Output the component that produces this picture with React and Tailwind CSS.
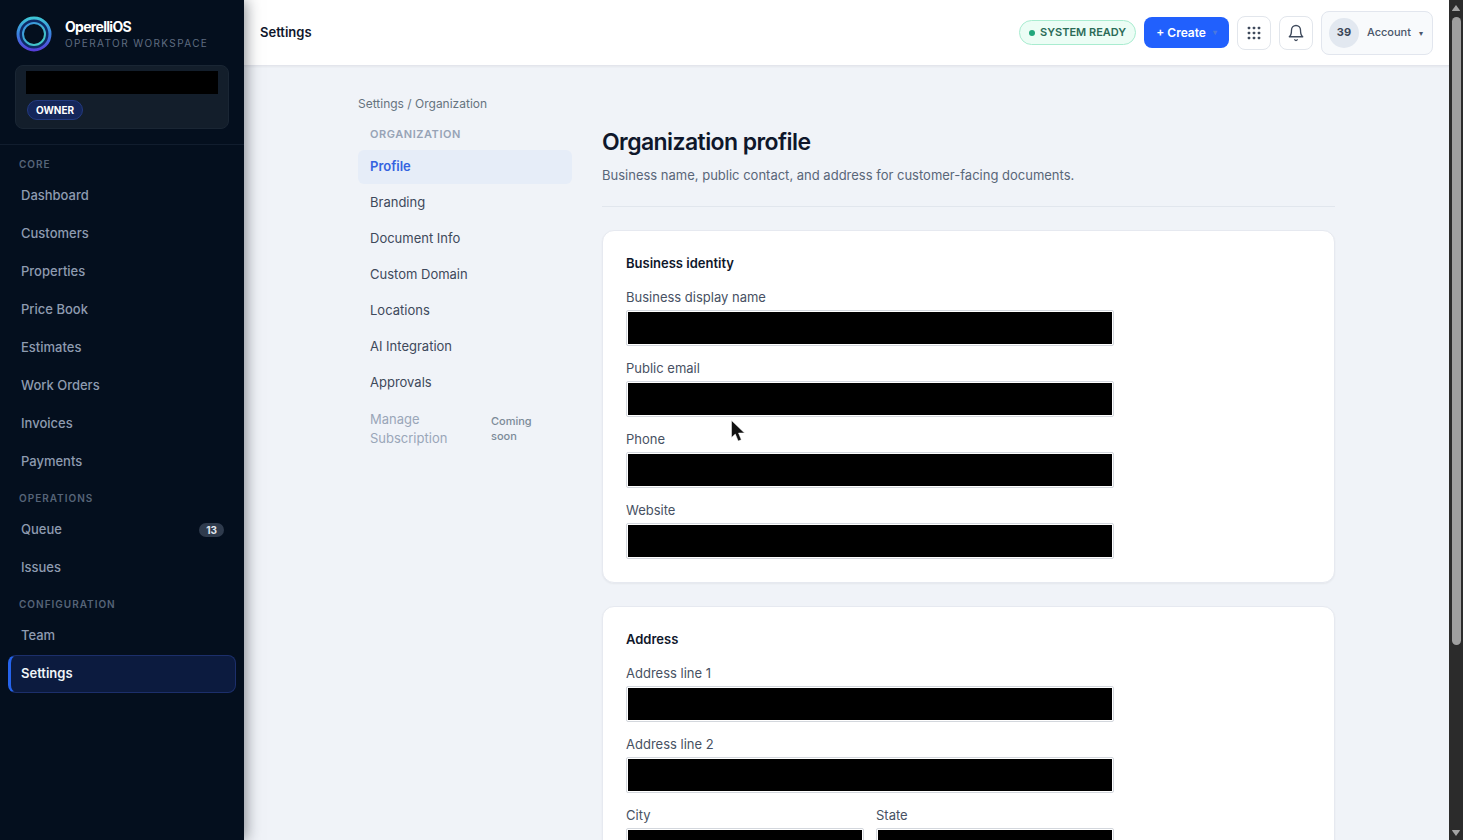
import React from "react";

const navSections = [
  {
    title: "Core",
    items: [
      { label: "Dashboard" },
      { label: "Customers" },
      { label: "Properties" },
      { label: "Price Book" },
      { label: "Estimates" },
      { label: "Work Orders" },
      { label: "Invoices" },
      { label: "Payments" },
    ],
  },
  {
    title: "Operations",
    items: [{ label: "Queue", count: 13 }, { label: "Issues" }],
  },
  {
    title: "Configuration",
    items: [{ label: "Team" }, { label: "Settings", active: true }],
  },
];

const settingsLinks = [
  "Profile",
  "Branding",
  "Document Info",
  "Custom Domain",
  "Locations",
  "AI Integration",
  "Approvals",
];

const Logo = () => (
  <svg className="w-[38px] h-[38px] shrink-0" viewBox="0 0 38 38" fill="none">
    <defs>
      <linearGradient id="ringOuter" x1="19" y1="0" x2="19" y2="38" gradientUnits="userSpaceOnUse">
        <stop stopColor="#3fd0d4" />
        <stop offset="0.5" stopColor="#3b82e0" />
        <stop offset="1" stopColor="#5b35d8" />
      </linearGradient>
      <linearGradient id="ringInner" x1="10" y1="8" x2="28" y2="30" gradientUnits="userSpaceOnUse">
        <stop stopColor="#3a8fe0" />
        <stop offset="1" stopColor="#45cfc4" />
      </linearGradient>
    </defs>
    <circle cx="19" cy="19" r="14" stroke="#0d2a66" strokeWidth="5" />
    <circle cx="19" cy="19" r="16" stroke="url(#ringOuter)" strokeWidth="3" />
    <circle cx="19" cy="19" r="11" stroke="url(#ringInner)" strokeWidth="2" />
  </svg>
);

const NavItem = ({ item }) => (
  <a
    href="#"
    className={
      item.active
        ? "flex items-center h-[38px] pl-[10px] pr-3 rounded-lg border border-l-[3px] border-[#1c2f6b] border-l-[#2563eb] bg-[#0c1b3f] text-[13px] font-semibold text-slate-100"
        : "flex items-center h-[38px] pl-[13px] pr-3 text-[13px] font-medium text-[#8e9bb0]"
    }
  >
    <span className="flex-1">{item.label}</span>
    {item.count && (
      <span className="rounded-full bg-[#2f3b4d] px-[7px] text-[10px] leading-[14px] font-bold text-slate-200">
        {item.count}
      </span>
    )}
  </a>
);

const Sidebar = () => (
  <aside className="relative z-10 w-[244px] shrink-0 bg-[#040f1e] shadow-[2px_0_14px_rgba(30,35,45,0.5)]">
    <div className="border-b border-[#111d2e] px-[15px] pt-[15px] pb-[15px]">
      <div className="flex items-center gap-3">
        <Logo />
        <div>
          <p className="text-sm leading-[18px] font-bold tracking-tighter text-white">OperelliOS</p>
          <p className="text-[10px] leading-[14px] tracking-[0.14em] text-[#5f6c80]">OPERATOR WORKSPACE</p>
        </div>
      </div>
      <div className="mt-3 h-16 rounded-lg border border-[#1a2634] bg-[#131e2b] px-[10px] pt-[5px]">
        <div className="h-[23px] bg-black"></div>
        <span className="mt-[6px] ml-px inline-block rounded-full border border-[#233a80] bg-[#14265a] px-2 text-[10px] leading-[18px] font-bold text-white">
          OWNER
        </span>
      </div>
    </div>
    <nav className="px-2 pt-[2px]">
      {navSections.map((section) => (
        <div key={section.title}>
          <h2 className="px-[11px] pt-[10px] pb-[6px] text-[10px] leading-[14px] font-semibold uppercase tracking-widest text-[#566478]">
            {section.title}
          </h2>
          {section.items.map((item) => (
            <NavItem key={item.label} item={item} />
          ))}
        </div>
      ))}
    </nav>
  </aside>
);

const Header = () => (
  <header className="flex items-center justify-between h-[66px] shrink-0 border-b border-[#e3e5ec] bg-white px-4 shadow-xs">
    <p className="text-[13px] font-semibold text-slate-900">Settings</p>
    <div className="flex items-center gap-2">
      <span className="flex items-center gap-[5px] h-[25px] rounded-full border border-[#a9ecd0] bg-[#ecfdf5] px-[9px] text-[11px] font-semibold text-[#2b6b57]">
        <span className="w-[6px] h-[6px] rounded-full bg-[#22a77c]"></span>
        SYSTEM READY
      </span>
      <button className="flex items-center h-[31px] rounded-lg bg-[#2160fd] px-3 text-xs font-semibold text-white">
        + Create
        <span className="ml-[7px] text-[8px] text-[#4b78dd]">▾</span>
      </button>
      <button aria-label="Apps" className="flex items-center justify-center w-[34px] h-[34px] rounded-lg border border-[#e2e6ec] bg-white">
        <svg className="w-[14px] h-[14px]" viewBox="0 0 14 14" fill="#3f4a5c">
          {[0, 5, 10].map((y) =>
            [0, 5, 10].map((x) => <rect key={`${x}-${y}`} x={x + 0.7} y={y + 0.7} width="2.600" height="2.600" rx="0.800" />)
          )}
        </svg>
      </button>
      <button aria-label="Notifications" className="flex items-center justify-center w-[34px] h-[34px] rounded-lg border border-[#e2e6ec] bg-white">
        <svg className="w-[18px] h-[18px]" viewBox="0 0 24 24" fill="none" stroke="#3f4a5c" strokeWidth="1.800" strokeLinecap="round" strokeLinejoin="round">
          <path d="M18 8A6 6 0 0 0 6 8c0 7-3 9-3 9h18s-3-2-3-9" />
          <path d="M13.7 21a2 2 0 0 1-3.4 0" />
        </svg>
      </button>
      <button className="flex items-center h-11 rounded-lg border border-[#e2e6ee] bg-[#f8fafc] pl-[7px] pr-[9px] text-[11px] font-medium text-[#4a566a]">
        <span className="flex items-center justify-center w-[30px] h-[30px] mr-2 rounded-full bg-[#e2e8f0] font-bold text-[#3b4658]">39</span>
        Account
        <span className="ml-2 text-[8px]">▾</span>
      </button>
    </div>
  </header>
);

const Field = ({ id, label }) => (
  <div>
    <label htmlFor={id} className="block text-[13px] leading-5 text-[#475163]">
      {label}
    </label>
    <input
      id={id}
      type="text"
      className="block mt-[3px] h-9 w-full rounded-xs border border-[#d3d7dd] bg-black bg-clip-content p-px text-black"
    />
  </div>
);

const Card = ({ title, children }) => (
  <section className="mb-[23px] rounded-xl border border-[#e6e9f0] bg-white px-[23px] pt-[22px] pb-[23px] shadow-xs">
    <h2 className="text-[13px] leading-5 font-semibold text-slate-900">{title}</h2>
    <div className="mt-[14px] flex max-w-[488px] flex-col gap-3">{children}</div>
  </section>
);

const SettingsNav = () => (
  <nav className="w-[214px] shrink-0 text-[13px] text-[#3e495b]">
    <h2 className="px-3 pt-[14px] pb-2 text-[11px] leading-4 font-semibold tracking-wider text-[#97a3b6]">ORGANIZATION</h2>
    <ul className="flex flex-col gap-[2px]">
      {settingsLinks.map((link, index) => (
        <li key={link}>
          <a
            href="#"
            className={
              index === 0
                ? "flex items-center h-[34px] rounded-md bg-[#e6edf8] px-3 font-semibold text-[#3563e0]"
                : "flex items-center h-[34px] px-3"
            }
          >
            {link}
          </a>
        </li>
      ))}
      <li className="flex items-center justify-between gap-2 px-3 py-2 text-[#9aa6b8]">
        <span className="w-20 leading-[19px]">Manage Subscription</span>
        <span className="w-[69px] pr-5 text-[11px] leading-[15px] font-medium text-[#7c8b98]">Coming soon</span>
      </li>
    </ul>
  </nav>
);

// scroll track of the window
const ScrollTrack = () => (
  <div className="flex w-[14px] shrink-0 flex-col items-center bg-[#2b2b2b]">
    <svg className="w-[10px] h-[17px] shrink-0" viewBox="0 0 10 17" fill="#a3a3a3">
      <path d="M5 5 9 10.5Q9 11 8.500 11H1.500Q1 11 1 10.500Z" />
    </svg>
    <div className="h-[628px] w-[9px] rounded-full bg-[#9f9f9f]"></div>
    <svg className="mt-auto w-[10px] h-[17px] shrink-0" viewBox="0 0 10 17" fill="#a3a3a3">
      <path d="M5 13 9 7.500Q9 7 8.500 7H1.500Q1 7 1 7.500Z" />
    </svg>
  </div>
);

const App = () => (
  <div className="relative flex h-screen overflow-hidden bg-[#f0f3f8] font-['Inter',sans-serif]">
    <Sidebar />
    <div className="flex min-w-0 flex-1 flex-col">
      <Header />
      <main className="flex-1 overflow-hidden px-6 pt-[30px]">
        <div className="mx-auto max-w-[977px]">
          <p className="text-xs text-[#66737f]">
            <a href="#">Settings</a> / <span>Organization</span>
          </p>
          <div className="flex gap-[30px]">
            <SettingsNav />
            <div className="min-w-0 flex-1">
              <div className="mb-[23px] border-b border-[#e1e6ed] pt-[14px] pb-[21px]">
                <h1 className="text-[23px] leading-8 font-semibold tracking-tight text-slate-900">Organization profile</h1>
                <p className="mt-[7px] text-[13px] leading-5 text-[#596678]">
                  Business name, public contact, and address for customer-facing documents.
                </p>
              </div>
              <Card title="Business identity">
                <Field id="display-name" label="Business display name" />
                <Field id="email" label="Public email" />
                <Field id="phone" label="Phone" />
                <Field id="website" label="Website" />
              </Card>
              <Card title="Address">
                <Field id="line1" label="Address line 1" />
                <Field id="line2" label="Address line 2" />
                <div className="grid grid-cols-2 gap-3">
                  <Field id="city" label="City" />
                  <Field id="state" label="State" />
                </div>
              </Card>
            </div>
          </div>
        </div>
      </main>
    </div>
    <ScrollTrack />
    <svg className="absolute left-[731px] top-[420px] w-[15px] h-[22px]" viewBox="0 0 15 22" fill="#111" stroke="#fff" strokeWidth="0.5">
      <path d="M0.500 0.500V17.500L4.300 14 7.200 21 10.300 19.700 7.500 13H13.500Z" />
    </svg>
  </div>
);

export default App;
